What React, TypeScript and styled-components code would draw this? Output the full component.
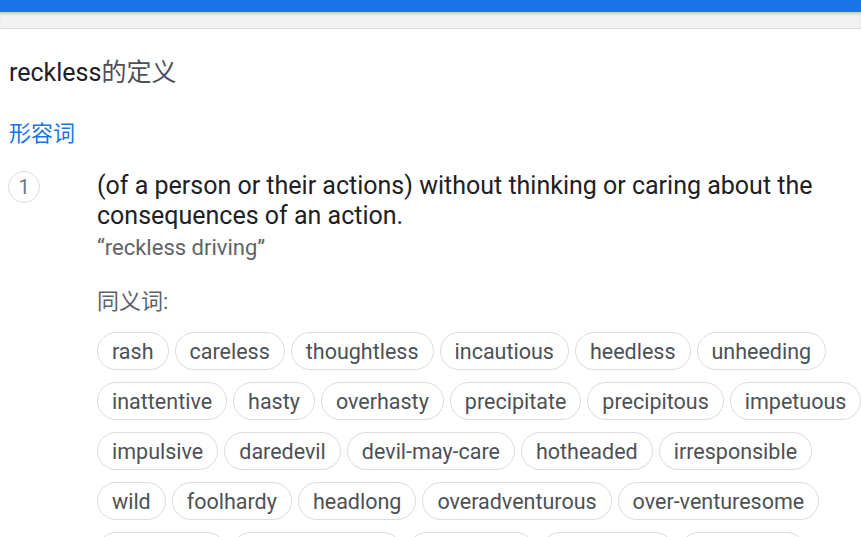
import React from "react";
import styled, { createGlobalStyle } from "styled-components";

const GlobalStyle = createGlobalStyle`
  html, body {
    margin: 0;
    padding: 0;
    background: #fff;
    overflow: hidden;
  }
  body {
    font-family: Roboto, "Noto Sans CJK SC", Arial, sans-serif;
    color: #202124;
  }
`;

const synonyms = [
  "rash",
  "careless",
  "thoughtless",
  "incautious",
  "heedless",
  "unheeding",
  "inattentive",
  "hasty",
  "overhasty",
  "precipitate",
  "precipitous",
  "impetuous",
  "impulsive",
  "daredevil",
  "devil-may-care",
  "hotheaded",
  "irresponsible",
  "wild",
  "foolhardy",
  "headlong",
  "overadventurous",
  "over-venturesome",
  "audacious",
  "harum-scarum",
  "imprudent",
  "injudicious",
  "ill-advised",
];

const StyledTopBar = styled.div`
  height: 12px;
  background-color: #1a73e8;
`;

const StyledToolbar = styled.div`
  height: 16px;
  background-color: #f2f2f2;
  border-bottom: 1px solid #d9d9d9;
  box-shadow: inset 0 3px 3px -1px rgba(0, 0, 0, 0.18);
`;

const StyledPage = styled.div`
  width: 872px;
  padding-left: 9px;
  box-sizing: border-box;
`;

const StyledTitle = styled.div`
  font-size: 25px;
  line-height: 32px;
  margin-top: 28px;
  color: #202124;
`;

const StyledTitleSuffix = styled.span`
  color: #4d5156;
`;

const StyledPos = styled.div`
  font-size: 22px;
  line-height: 30px;
  margin-top: 30px;
  color: #1a73e8;
`;

const StyledSense = styled.div`
  display: flex;
  margin-top: 22px;
`;

const StyledNumberCol = styled.div`
  width: 88px;
  flex-shrink: 0;
`;

const StyledNumber = styled.div`
  width: 30px;
  height: 30px;
  margin-left: -1px;
  border: 1px solid #dadce0;
  border-radius: 50%;
  display: flex;
  align-items: center;
  justify-content: center;
  font-size: 20px;
  color: #70757a;
`;

const StyledBody = styled.div`
  flex: 1;
`;

const StyledDefinition = styled.div`
  font-size: 25px;
  line-height: 30px;
  color: #202124;
`;

const StyledExample = styled.div`
  font-size: 22px;
  line-height: 34px;
  color: #5f6368;
`;

const StyledSynLabel = styled.div`
  font-size: 22px;
  line-height: 28px;
  margin-top: 23px;
  color: #5f6368;
`;

const StyledChips = styled.div`
  display: flex;
  flex-wrap: wrap;
  gap: 12px 6px;
  margin-top: 16px;
`;

const StyledChip = styled.div`
  height: 38px;
  box-sizing: border-box;
  padding: 0 14px;
  border: 1px solid #dadce0;
  border-radius: 19px;
  display: flex;
  align-items: center;
  font-size: 21.5px;
  color: #4d5156;
  white-space: nowrap;
`;

export default function App() {
  return (
    <>
      <GlobalStyle />
      <StyledTopBar />
      <StyledToolbar />
      <StyledPage>
        <StyledTitle>
          reckless<StyledTitleSuffix>的定义</StyledTitleSuffix>
        </StyledTitle>
        <StyledPos>形容词</StyledPos>
        <StyledSense>
          <StyledNumberCol>
            <StyledNumber>1</StyledNumber>
          </StyledNumberCol>
          <StyledBody>
            <StyledDefinition>
              (of a person or their actions) without thinking or caring about
              the consequences of an action.
            </StyledDefinition>
            <StyledExample>“reckless driving”</StyledExample>
            <StyledSynLabel>同义词:</StyledSynLabel>
            <StyledChips>
              {synonyms.map((word) => (
                <StyledChip key={word}>{word}</StyledChip>
              ))}
            </StyledChips>
          </StyledBody>
        </StyledSense>
      </StyledPage>
    </>
  );
}
